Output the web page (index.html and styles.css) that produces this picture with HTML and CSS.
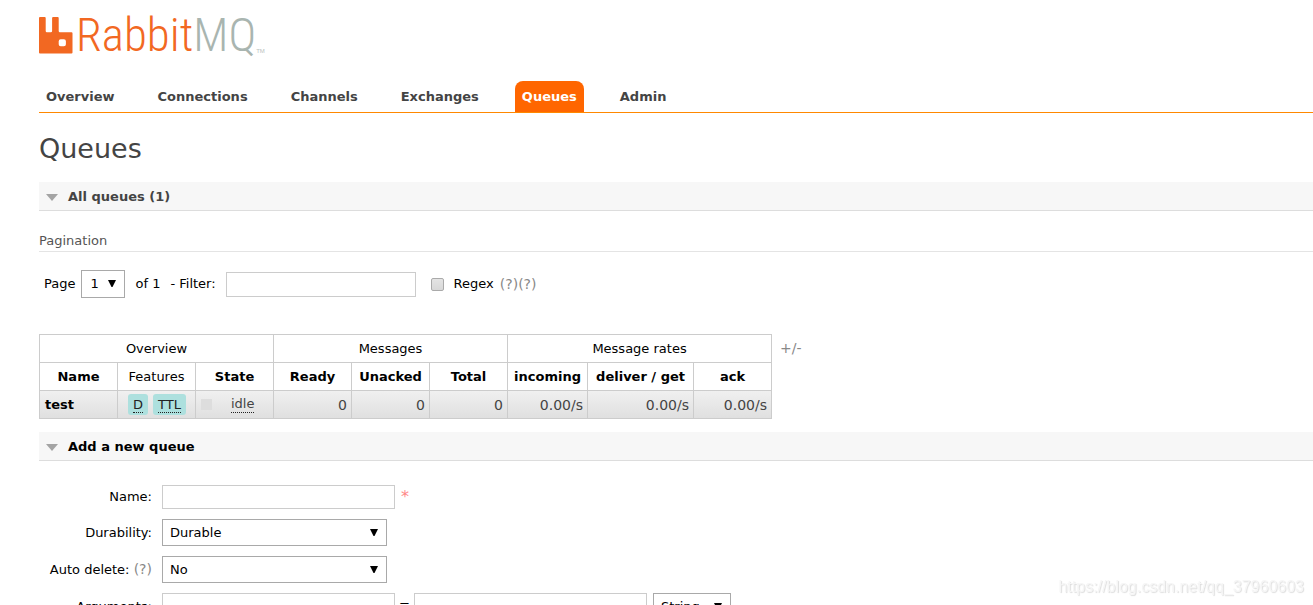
FILE: index.html
```html
<!DOCTYPE html>
<html lang="en">
<head>
<meta charset="utf-8">
<title>RabbitMQ Management</title>
<link rel="stylesheet" href="styles.css">
</head>
<body>
<header class="header">
  <a class="logo" href="#" aria-label="RabbitMQ">
    <svg class="logo-mark" width="34" height="37" viewBox="0 0 34 37" aria-hidden="true">
      <path fill="#f26822" fill-rule="evenodd" d="M1 0h4.700a1 1 0 0 1 1 1v13a1.200 1.200 0 0 0 1.200 1.200h4a1.200 1.200 0 0 0 1.200-1.200v-13a1 1 0 0 1 1-1h4.600a1 1 0 0 1 1 1v13a1.200 1.200 0 0 0 1.200 1.200h11.600a1 1 0 0 1 1 1v19.300a1 1 0 0 1-1 1h-31.500a1 1 0 0 1-1-1v-34.500a1 1 0 0 1 1-1zM21.700 22.300a2 2 0 0 0-2 2v3a2 2 0 0 0 2 2h3.200a2 2 0 0 0 2-2v-3a2 2 0 0 0-2-2z"/>
    </svg>
    <span class="logo-text">Rabbit<span class="logo-mq">MQ</span></span><span class="logo-tm">TM</span>
  </a>
  <nav class="tabs">
    <a class="tab" href="#">Overview</a>
    <a class="tab" href="#">Connections</a>
    <a class="tab" href="#">Channels</a>
    <a class="tab" href="#">Exchanges</a>
    <a class="tab selected" href="#">Queues</a>
    <a class="tab" href="#">Admin</a>
  </nav>
</header>
<main class="main">
  <h1 class="title">Queues</h1>

  <h2 class="section-head muted">All queues (1)</h2>
  <section class="queues">
    <h3 class="sub-head">Pagination</h3>
    <form class="pagination">
      <label for="page">Page</label>
      <select class="select page-select" id="page"><option>1</option></select>
      <span class="of">of 1</span>
      <label class="filter-label" for="filter">- Filter:</label>
      <input class="text filter" id="filter" type="text">
      <input class="check" id="regex" type="checkbox">
      <label for="regex">Regex</label>
      <span class="helps"><a class="help" href="#">(?)</a><a class="help" href="#">(?)</a></span>
    </form>
    <div class="table-wrap">
      <table class="list">
        <colgroup><col class="std" span="6"><col class="rate"><col class="deliver"><col class="std"></colgroup>
        <thead>
          <tr><th class="plain" colspan="3">Overview</th><th class="plain" colspan="3">Messages</th><th class="plain" colspan="3">Message rates</th></tr>
          <tr><th>Name</th><th class="plain">Features</th><th>State</th><th>Ready</th><th>Unacked</th><th>Total</th><th>incoming</th><th>deliver / get</th><th>ack</th></tr>
        </thead>
        <tbody>
          <tr>
            <td><a class="queue-link" href="#">test</a></td>
            <td><div class="features"><span class="tag"><abbr>D</abbr></span><span class="tag"><abbr>TTL</abbr></span></div></td>
            <td><div class="state"><span class="state-box"></span><abbr class="idle">idle</abbr></div></td>
            <td class="num">0</td><td class="num">0</td><td class="num">0</td>
            <td class="num">0.00/s</td><td class="num">0.00/s</td><td class="num">0.00/s</td>
          </tr>
        </tbody>
      </table>
      <a class="columns" href="#">+/-</a>
    </div>
  </section>

  <h2 class="section-head">Add a new queue</h2>
  <form class="add">
    <label class="label" for="name">Name:</label>
    <div class="field"><input class="text wide" id="name" type="text"><span class="mand">*</span></div>
    <label class="label" for="durable">Durability:</label>
    <div class="field"><select class="select wide-select" id="durable"><option>Durable</option></select></div>
    <div class="label"><label for="auto">Auto delete:</label> <a class="help" href="#">(?)</a></div>
    <div class="field"><select class="select wide-select" id="auto"><option>No</option></select></div>
    <label class="label" for="arg">Arguments:</label>
    <div class="field">
      <input class="text wide" id="arg" type="text"><span class="equals">=</span><input class="text wide" type="text" aria-label="Argument value">
      <select class="select type-select" aria-label="Argument type"><option>String</option></select>
    </div>
  </form>
</main>
<div class="watermark">https://blog.csdn.net/qq_37960603</div>
</body>
</html>
```
FILE: styles.css
```css
* { box-sizing: border-box; }
body {
  margin: 0;
  height: 100vh;
  overflow: hidden;
  background: #fff;
  color: #000;
  font: 13px/16px Verdana, "DejaVu Sans", sans-serif;
}
a { color: inherit; text-decoration: none; }
input, select { font: inherit; color: #000; margin: 0; }

.header { padding: 12px 0 0 39px; }
.logo { display: flex; align-items: center; height: 46px; width: max-content; }
.logo-mark { margin-right: 3px; }
.logo-text {
  font: 300 47px/46px "Roboto Condensed", Roboto, sans-serif;
  color: #f26822;
}
.logo-mq { color: #a9b5b0; }
.logo-tm { align-self: flex-end; color: #b9c2be; font: 6px/14px "Liberation Sans", sans-serif; }

.tabs { display: flex; gap: 29px; margin-top: 23px; border-bottom: 1px solid #f80; }
.tab { padding: 8px 7px 7px; font-weight: bold; color: #444; border-radius: 8px 8px 0 0; }
.tab.selected { background: #f60; color: #fff; }

.main { padding-left: 39px; }
.title { margin: 20px 0 18px; font-size: 27px; line-height: 31px; font-weight: normal; color: #444; }
.section-head {
  display: flex;
  align-items: center;
  gap: 10px;
  margin: 0;
  padding: 7px 7px 5px;
  border-bottom: 1px solid #ddd;
  background: #f7f7f7;
  font-size: 13px;
  line-height: 16px;
}
.section-head.muted { color: #444; }
.section-head::before {
  content: "";
  border: solid transparent;
  border-width: 7px 6px 0;
  border-top-color: #a4a4a4;
}

.queues { padding: 22px 0 13px; }
.sub-head { margin: 0; padding-bottom: 2px; border-bottom: 1px solid #e4e4e4; font-size: 13px; line-height: 16px; font-weight: normal; color: #555; }
.pagination { display: flex; align-items: center; padding: 18px 5px 36px; }
.select {
  appearance: none;
  height: 28px;
  padding: 0 7px;
  border: 1px solid #a9a9a9;
  border-radius: 0;
  background: #fff url("data:image/svg+xml,%3Csvg xmlns='http://www.w3.org/2000/svg' width='8' height='8'%3E%3Cpath d='M0 0h8L4.500 7h-1z'/%3E%3C/svg%3E") no-repeat right 8px center;
}
.page-select { width: 44px; margin: 0 10px 0 6px; padding-left: 8px; }
.of { margin-right: 10px; }
.text { height: 24px; border: 1px solid #ccc; padding: 2px; background: #fff; }
.filter { width: 190px; height: 25px; margin: 0 15px 0 10px; }
.check {
  appearance: none;
  width: 13px;
  height: 13px;
  margin-right: 10px;
  border: 1px solid #aaa;
  border-radius: 2px;
  background: linear-gradient(#e4e4e4, #d8d8d8);
}
.helps { margin-left: 6px; }
.help { color: #888; font-size: 14px; }

.table-wrap { display: flex; gap: 8px; }
.list { table-layout: fixed; width: 733px; border-collapse: collapse; }
.std { width: 78px; }
.rate { width: 80px; }
.deliver { width: 106px; }
.list th, .list td { height: 28px; padding: 0 4px; border: 1px solid #ccc; white-space: nowrap; }
.list th { padding: 0; }
.list th.plain { font-weight: normal; }
.list td { color: #444; padding-left: 5px; }
.list tbody tr { background: linear-gradient(#f0f0f0, #dfdfdf); }
.queue-link { color: #000; font-weight: bold; }
.list .num { text-align: right; font-size: 14px; }
abbr { border-bottom: 1px dotted #222; }
.features { display: flex; gap: 5px; padding-left: 5px; }
.tag { height: 21px; padding: 2px 5px; border-radius: 3px; background: #ade0de; color: #222; line-height: 17px; }
.tag abbr { display: block; height: 17px; }
.state { display: flex; align-items: center; gap: 19px; }
.state-box { width: 11px; height: 11px; background: #ddd; }
.idle { line-height: 16px; }
.columns { color: #888; font-size: 14px; line-height: 28px; }

.add {
  display: grid;
  grid-template-columns: 108px 1fr;
  column-gap: 10px;
  row-gap: 10px;
  padding: 24px 5px;
}
.label { align-self: center; text-align: right; }
.field { display: flex; align-items: flex-start; }
.wide { width: 233px; }
.add .select { height: 27px; }
.wide-select { width: 225px; }
.type-select { width: 78px; margin-left: 6px; }
.mand { margin-left: 6px; color: #f88; font-size: 16px; line-height: 24px; }
.equals { width: 19px; text-align: center; line-height: 24px; }

.watermark {
  position: fixed;
  right: 9px;
  bottom: 8px;
  font: 16px/20px "Liberation Sans", sans-serif;
  color: #f6f6f6;
  text-shadow: 1px 1px 1px #ddd;
}
```
